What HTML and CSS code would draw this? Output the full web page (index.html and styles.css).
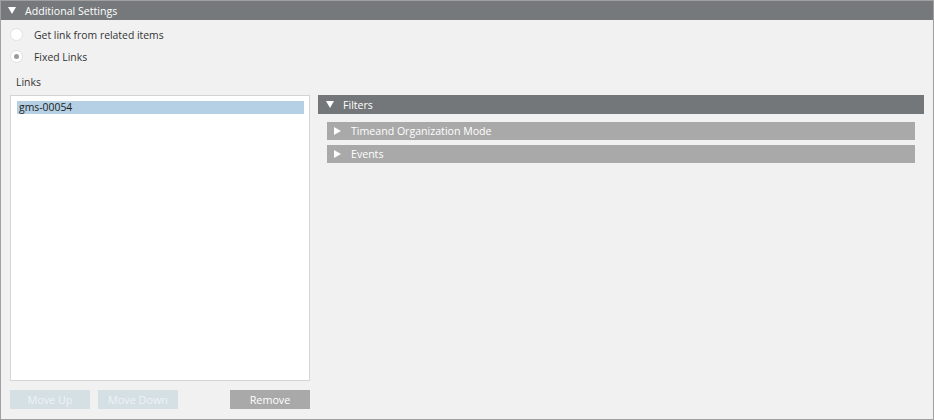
FILE: index.html
```html
<!DOCTYPE html>
<html lang="en">
<head>
    <meta charset="UTF-8">
    <title>Additional Settings</title>
    <link rel="stylesheet" href="styles.css">
</head>
<body>
    <div class="panel">
        <!-- Section header -->
        <div class="section-header">
            <svg class="arrow" width="8" height="7" viewBox="0 0 8 7"><path d="M0 0H8L4 7Z" fill="#fff"/></svg>
            <span>Additional Settings</span>
        </div>

        <div class="radio-group">
            <label class="radio-row">
                <span class="radio"></span>
                <span>Get link from related items</span>
            </label>
            <label class="radio-row">
                <span class="radio checked"></span>
                <span>Fixed Links</span>
            </label>
        </div>

        <div class="links-label">Links</div>

        <div class="content">
            <div class="links-column">
                <div class="links-list">
                    <div class="link-item selected">gms-00054</div>
                </div>
                <div class="button-row">
                    <button class="btn btn-disabled">Move Up</button>
                    <button class="btn btn-disabled">Move Down</button>
                    <button class="btn btn-remove">Remove</button>
                </div>
            </div>

            <div class="filters">
                <div class="section-header filters-header">
                    <svg class="arrow" width="8" height="7" viewBox="0 0 8 7"><path d="M0 0H8L4 7Z" fill="#fff"/></svg>
                    <span>Filters</span>
                </div>
                <div class="filter-row">
                    <svg class="arrow" width="7" height="8" viewBox="0 0 7 8"><path d="M0 0L7 4L0 8Z" fill="#fff"/></svg>
                    <span>Timeand Organization Mode</span>
                </div>
                <div class="filter-row">
                    <svg class="arrow" width="7" height="8" viewBox="0 0 7 8"><path d="M0 0L7 4L0 8Z" fill="#fff"/></svg>
                    <span>Events</span>
                </div>
            </div>
        </div>
    </div>
</body>
</html>
```

FILE: styles.css
```css
* {
    margin: 0;
    padding: 0;
    box-sizing: border-box;
}

body {
    background-color: #f1f1f1;
    font-family: 'Open Sans', 'Noto Sans', sans-serif;
    font-size: 10.4px;
    color: #333;
}

.panel {
    width: 934px;
    height: 420px;
    border: 1px solid #a0a0a0;
    background-color: #f1f1f1;
    display: flex;
    flex-direction: column;
}

.section-header {
    height: 19px;
    background-color: #75797b;
    color: #fff;
    display: flex;
    align-items: center;
    padding-left: 7px;
    font-size: 10.6px;
}

.section-header .arrow {
    margin-right: 9px;
}

.radio-group {
    padding: 8px 0 0 9px;
    display: flex;
    flex-direction: column;
    gap: 9px;
}

.radio-row {
    display: flex;
    align-items: center;
    height: 13px;
    gap: 11px;
    color: #333;
}

.radio {
    width: 13px;
    height: 13px;
    border-radius: 50%;
    background-color: #fff;
    border: 1px solid #e2e2e2;
    display: flex;
    align-items: center;
    justify-content: center;
}

.radio.checked::after {
    content: '';
    width: 5px;
    height: 5px;
    border-radius: 50%;
    background-color: #9a9a9a;
}

.links-label {
    margin: 12px 0 0 15px;
    height: 14px;
    line-height: 14px;
}

.content {
    display: flex;
    gap: 8px;
    margin: 6px 9px 0 9px;
}

.links-column {
    width: 300px;
    display: flex;
    flex-direction: column;
}

.links-list {
    height: 286px;
    background-color: #fff;
    border: 1px solid #d4d4d4;
    padding: 5px 5px 0 6px;
}

.link-item {
    height: 13px;
    line-height: 13px;
    padding-left: 2px;
    color: #222;
}

.link-item.selected {
    background-color: #b5d0e4;
}

.button-row {
    display: flex;
    margin-top: 9px;
    gap: 8px;
}

.btn {
    width: 80px;
    height: 19px;
    border: none;
    font-family: inherit;
    font-size: 10.8px;
    color: #fff;
}

.btn-disabled {
    background-color: #d5e0e4;
    color: #eef3f5;
}

.btn-remove {
    background-color: #a9a9a9;
    margin-left: 44px;
}

.filters {
    flex: 1;
    display: flex;
    flex-direction: column;
}

.filters-header {
    background-color: #737779;
    padding-left: 8px;
    margin-bottom: 8px;
}

.filter-row {
    height: 18px;
    margin: 0 9px 5px 9px;
    background-color: #a9a9a9;
    color: #fff;
    display: flex;
    align-items: center;
    padding-left: 7px;
    font-size: 10.6px;
}

.filter-row .arrow {
    margin-right: 10px;
}
```
